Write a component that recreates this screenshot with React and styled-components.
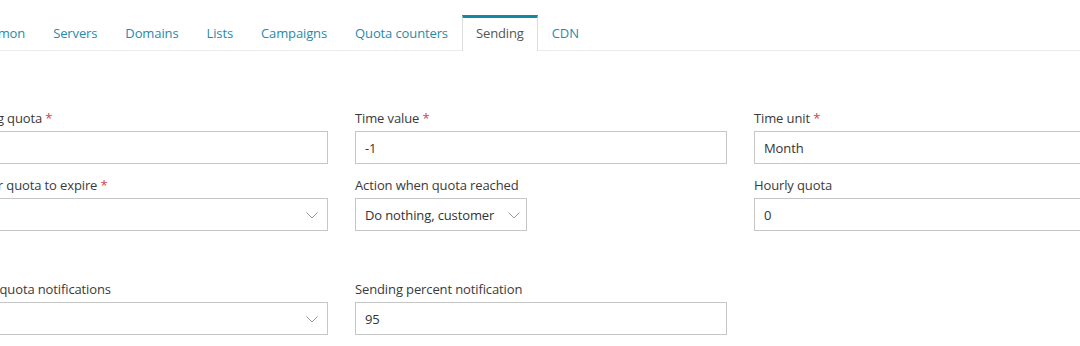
import React from 'react'
import styled, { createGlobalStyle } from 'styled-components'

const GlobalStyle = createGlobalStyle`
  body {
    margin: 0;
    background: #fff;
    font-family: 'Open Sans', 'Liberation Sans', sans-serif;
    font-size: 13px;
    letter-spacing: -0.12px;
    color: #333;
    overflow: hidden;
  }
`

// the screenshot is a crop of a wider page, so the sheet starts left of the window
const Sheet = styled.div`
  width: 1200px;
  margin-left: -44px;
`

const TabBar = styled.ul`
  display: flex;
  list-style: none;
  margin: 0;
  padding: 15px 0 0 0;
  border-bottom: 1px solid #ebebeb;
`

const Tab = styled.li`
  height: 32px;
  line-height: 30px;
  padding: 0 13px;
  border: 1px solid transparent;
  border-top: 3px solid transparent;
  border-bottom: none;
  margin-bottom: -1px;
  color: #1f8bad;
  white-space: nowrap;

  ${p => p.$active && `
    color: #555;
    background: #fff;
    border-color: #dcdcdc;
    border-top-color: #1289a3;
    height: 33px;
  `}
`

const Form = styled.div`
  display: grid;
  grid-template-columns: repeat(3, 372px);
  column-gap: 27px;
  row-gap: 12px;
  padding-top: 58px;
`

const Field = styled.div`
  display: flex;
  flex-direction: column;
  gap: 4px;
  margin-top: ${p => p.$spaced ? '37px' : '0'};
`

const Label = styled.label`
  line-height: 18px;
  color: #3a3a3a;
  white-space: nowrap;
`

const Req = styled.span`
  color: #d0434a;
`

const Box = styled.div`
  position: relative;
  box-sizing: border-box;
  height: 33px;
  width: ${p => p.$width || '100%'};
  border: 1px solid #c6c6c6;
  background: #fff;
  padding: 0 9px;
  display: flex;
  align-items: center;
  color: #333;
  white-space: nowrap;
`

const Chevron = styled.svg`
  position: absolute;
  right: ${p => p.$right || 9}px;
  top: 13px;
`

const Empty = styled.div``

const Arrow = ({ right }) => (
  <Chevron $right={right} width="12" height="7" viewBox="0 0 12 7">
    <path d="M0.5 0.5 L6 6 L11.5 0.5" fill="none" stroke="#9a9a9a" strokeWidth="1" />
  </Chevron>
)

const tabs = ['Common', 'Servers', 'Domains', 'Lists', 'Campaigns', 'Quota counters', 'Sending', 'CDN']

export default function App() {
  return (
    <Sheet>
      <GlobalStyle />
      <TabBar>
        {tabs.map(t => <Tab key={t} $active={t === 'Sending'}>{t}</Tab>)}
      </TabBar>
      <Form>
        <Field>
          <Label>Sending quota <Req>*</Req></Label>
          <Box />
        </Field>
        <Field>
          <Label>Time value <Req>*</Req></Label>
          <Box>-1</Box>
        </Field>
        <Field>
          <Label>Time unit <Req>*</Req></Label>
          <Box>Month</Box>
        </Field>

        <Field>
          <Label>Wait for quota to expire <Req>*</Req></Label>
          <Box><Arrow /></Box>
        </Field>
        <Field>
          <Label>Action when quota reached</Label>
          <Box $width="172px">Do nothing, customer<Arrow right={6} /></Box>
        </Field>
        <Field>
          <Label>Hourly quota</Label>
          <Box>0</Box>
        </Field>

        <Field $spaced>
          <Label>Enable quota notifications</Label>
          <Box><Arrow /></Box>
        </Field>
        <Field $spaced>
          <Label>Sending percent notification</Label>
          <Box>95</Box>
        </Field>
        <Empty />
      </Form>
    </Sheet>
  )
}
